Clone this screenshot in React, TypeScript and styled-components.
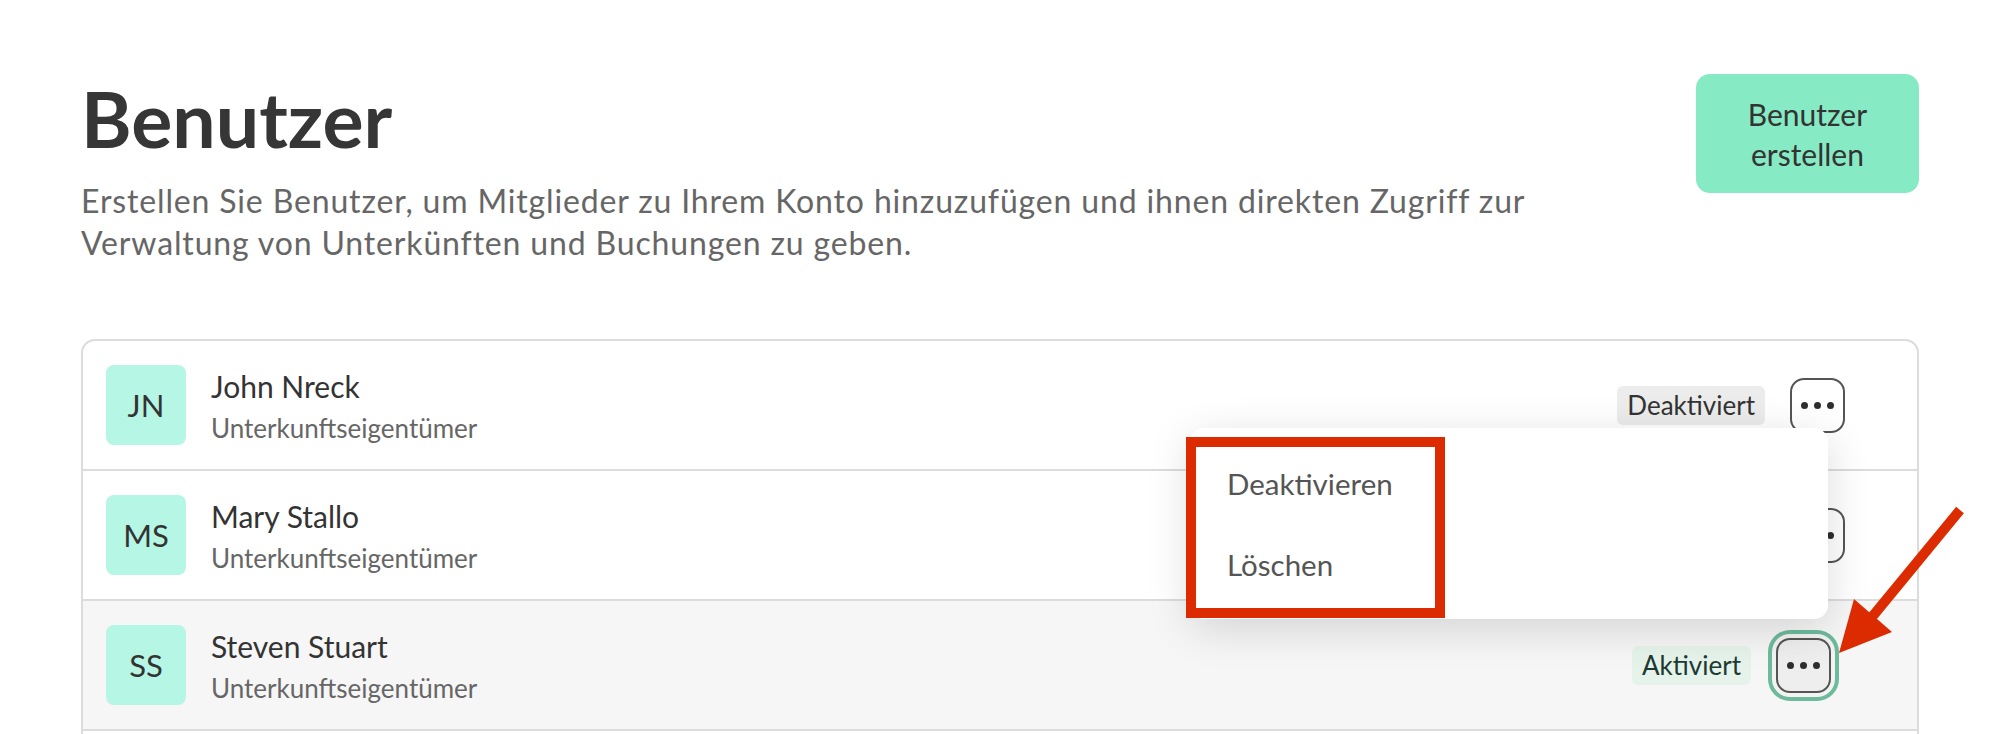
import React from "react";
import styled, { createGlobalStyle } from "styled-components";

const GlobalStyle = createGlobalStyle`
  html, body {
    margin: 0;
    padding: 0;
    background: #fff;
  }
  body {
    font-family: Lato, "Noto Sans", sans-serif;
    color: #333;
  }
`;

type User = {
    initials: string,
    name: string,
    role: string,
    active: boolean
}

const users: User[] = [
    { initials: "JN", name: "John Nreck", role: "Unterkunftseigentümer", active: false },
    { initials: "MS", name: "Mary Stallo", role: "Unterkunftseigentümer", active: true },
    { initials: "SS", name: "Steven Stuart", role: "Unterkunftseigentümer", active: true }
];

const OPEN_ROW = 2;

const App = () => {
    return (
        <Page>
            <GlobalStyle />
            <Header>
                <HeaderText>
                    <Title>Benutzer</Title>
                    <Description>
                        Erstellen Sie Benutzer, um Mitglieder zu Ihrem Konto hinzuzufügen und ihnen direkten Zugriff zur Verwaltung von Unterkünften und Buchungen zu geben.
                    </Description>
                </HeaderText>
                <CreateButton>Benutzer erstellen</CreateButton>
            </Header>

            <Card>
                {users.map((user, i) => (
                    <Row key={user.initials} $hover={i === OPEN_ROW}>
                        <Avatar>{user.initials}</Avatar>
                        <Info>
                            <Name>{user.name}</Name>
                            <Role>{user.role}</Role>
                        </Info>
                        <Actions>
                            <Badge $active={user.active}>{user.active ? "Aktiviert" : "Deaktiviert"}</Badge>
                            <MoreButton $focused={i === OPEN_ROW}>
                                <Dot /><Dot /><Dot />
                            </MoreButton>
                            {i === OPEN_ROW && (
                                <Menu>
                                    <MenuItem>Deaktivieren</MenuItem>
                                    <MenuItem>Löschen</MenuItem>
                                    <Highlight />
                                </Menu>
                            )}
                        </Actions>
                    </Row>
                ))}
            </Card>

            <Arrow width="170" height="170" viewBox="0 0 170 170">
                <line x1="140" y1="15" x2="52" y2="122" stroke="#dc2b00" strokeWidth="10" />
                <polygon points="19,158 34,104 72,137" fill="#dc2b00" />
            </Arrow>
        </Page>
    )
}

const Page = styled.div`
  position: relative;
  box-sizing: border-box;
  height: 734px;
  overflow: hidden;
  padding: 72px 87px 0 81px;
`;

const Header = styled.div`
  display: flex;
  justify-content: space-between;
  align-items: flex-start;
  gap: 40px;
`;

const HeaderText = styled.div`
  flex: 1;
  max-width: 1540px;
`;

const Title = styled.h1`
  margin: 0;
  font-size: 77px;
  line-height: 92px;
  font-weight: 700;
  color: #363636;
`;

const Description = styled.p`
  margin: 16px 0 0;
  font-size: 32px;
  letter-spacing: 0.85px;
  line-height: 42px;
  color: #666;
`;

const CreateButton = styled.button`
  margin-top: 2px;
  flex-shrink: 0;
  width: 223px;
  height: 119px;
  padding: 0 24px;
  border: none;
  border-radius: 14px;
  background: #86eac4;
  font-family: inherit;
  font-size: 30px;
  line-height: 40px;
  color: #333;
`;

const Card = styled.div`
  margin-top: 75px;
  padding-bottom: 40px;
  border: 2px solid #dcdcdc;
  border-radius: 14px;
`;

const Row = styled.div<{ $hover: boolean }>`
  position: relative;
  display: flex;
  align-items: center;
  height: 128px;
  padding: 0 72px 0 23px;
  border-bottom: 2px solid #dcdcdc;
  background: ${p => p.$hover ? "#f6f6f6" : "transparent"};
`;

const Avatar = styled.div`
  display: flex;
  align-items: center;
  justify-content: center;
  width: 80px;
  height: 80px;
  border-radius: 8px;
  background: #b6f6e5;
  font-size: 31px;
  color: #333;
`;

const Info = styled.div`
  flex: 1;
  display: flex;
  flex-direction: column;
  margin-left: 25px;
`;

const Name = styled.div`
  font-size: 30px;
  line-height: 38px;
  color: #333;
`;

const Role = styled.div`
  margin-top: 7px;
  font-size: 26px;
  line-height: 32px;
  color: #666;
`;

const Actions = styled.div`
  position: relative;
  display: flex;
  align-items: center;
  gap: 25px;
`;

const Badge = styled.span<{ $active: boolean }>`
  height: 39px;
  padding: 0 10px;
  border-radius: 6px;
  font-size: 26px;
  line-height: 39px;
  background: ${p => p.$active ? "#e5f3ea" : "#ececec"};
  color: ${p => p.$active ? "#1d3a33" : "#333"};
`;

const MoreButton = styled.button<{ $focused: boolean }>`
  box-sizing: border-box;
  display: flex;
  align-items: center;
  justify-content: center;
  gap: 6px;
  width: 55px;
  height: 55px;
  padding: 0;
  margin-right: ${p => p.$focused ? "14px" : "0"};
  border: 2px solid #555;
  border-radius: 14px;
  background: ${p => p.$focused ? "#eeeeee" : "transparent"};
  box-shadow: ${p => p.$focused ? "0 0 0 4px #f3f3f3, 0 0 0 8px #6dba9c" : "none"};
`;

const Dot = styled.span`
  width: 7px;
  height: 7px;
  border-radius: 50%;
  background: #2e2e2e;
`;

const Menu = styled.div`
  position: absolute;
  right: 17px;
  bottom: calc(100% + 19px);
  z-index: 5;
  box-sizing: border-box;
  width: 638px;
  height: 191px;
  padding: 15px 0 14px;
  border-radius: 14px;
  background: #fff;
  box-shadow: 0 10px 44px rgba(0, 0, 0, 0.14);
`;

const MenuItem = styled.div`
  display: flex;
  align-items: center;
  height: 81px;
  padding: 0 37px;
  font-size: 29.5px;
  color: #555;
`;

const Highlight = styled.div`
  position: absolute;
  left: -4px;
  top: 9px;
  box-sizing: border-box;
  width: 259px;
  height: 181px;
  border: 10px solid #dc2b00;
  pointer-events: none;
`;

const Arrow = styled.svg`
  position: absolute;
  left: 1820px;
  top: 495px;
  z-index: 6;
`;

export default App;
